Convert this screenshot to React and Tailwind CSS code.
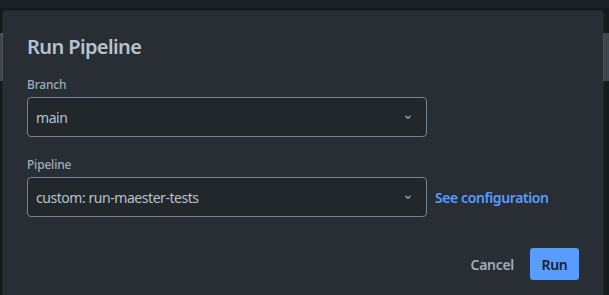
import React from 'react';

function Chevron() {
    return (
        <svg width="16" height="16" viewBox="0 0 24 24" className="text-[#9fadbc]">
            <path
                d="M8.3 10.3a1 1 0 0 1 1.4 0L12 12.6l2.3-2.3a1 1 0 1 1 1.4 1.4l-3 3a1 1 0 0 1-1.4 0l-3-3a1 1 0 0 1 0-1.4Z"
                fill="currentColor"
            />
        </svg>
    );
}

function SelectBox({ value }) {
    return (
        <div className="flex h-[40px] w-[400px] items-center justify-between rounded-[4px] border border-[#738496] bg-[#22272b] pl-[8px] pr-[10px]">
            <span className="text-[14px] tracking-[-0.45px] text-[#b6c2cf]">{value}</span>
            <Chevron />
        </div>
    );
}

export default function App() {
    return (
        <div
            className="relative h-[295px] w-[609px] overflow-hidden bg-[#161a1d]"
            style={{ fontFamily: '"Noto Sans", "Open Sans", sans-serif' }}
        >
            {/* dimmed page behind */}
            <div className="h-[8px] bg-[#1d2125]" />
            <div className="h-[48px] bg-[#40464d]">
                <div className="ml-[1px] mt-[25px] h-[3px] w-[2px] bg-[#2f5a8a]" />
            </div>

            {/* modal */}
            <div className="absolute left-[3px] top-[11px] h-[320px] w-[600px] rounded-[3px] bg-[#282e33] px-[24px] pt-[24px] shadow-[0_0_0_1px_rgba(255,255,255,0.06)]">
                <h1 className="h-[24px] text-[20px] font-semibold leading-[24px] tracking-[-0.6px] text-[#b6c2cf]">
                    Run Pipeline
                </h1>

                <div className="mt-[18px] h-[16px] text-[12px] font-medium leading-[16px] tracking-[-0.2px] text-[#9fadbc]">
                    Branch
                </div>
                <div className="mt-[4px]">
                    <SelectBox value="main" />
                </div>

                <div className="mt-[20px] h-[16px] text-[12px] font-medium leading-[16px] tracking-[-0.2px] text-[#9fadbc]">
                    Pipeline
                </div>
                <div className="mt-[4px] flex items-center gap-[8px]">
                    <SelectBox value="custom: run-maester-tests" />
                    <a className="text-[14px] font-semibold tracking-[-0.4px] text-[#579dff]">See configuration</a>
                </div>

                <div className="mt-[31px] flex justify-end gap-[14px]">
                    <button className="h-[32px] rounded-[3px] px-[2px] text-[14px] font-semibold tracking-[-0.3px] text-[#9fadbc]">
                        Cancel
                    </button>
                    <button className="h-[32px] w-[49px] rounded-[3px] bg-[#579dff] text-[14px] font-semibold tracking-[-0.3px] text-[#1d2125]">
                        Run
                    </button>
                </div>
            </div>
        </div>
    );
}
